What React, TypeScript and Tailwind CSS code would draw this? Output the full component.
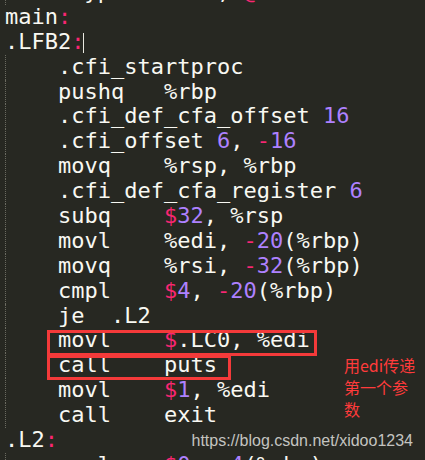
import React from 'react';

type Tok = [string, 'w' | 'p' | 'n'];

// indent = one level of indentation, drawn with the dotted guide
const lines: { indent: boolean; toks: Tok[]; cursor?: boolean }[] = [
  { indent: true, toks: [['.type   main, ', 'w'], ['@', 'p'], ['function', 'w']] },
  { indent: false, toks: [['main', 'w'], [':', 'p']] },
  { indent: false, toks: [['.LFB2', 'w'], [':', 'p']], cursor: true },
  { indent: true, toks: [['.cfi_startproc', 'w']] },
  { indent: true, toks: [['pushq   %rbp', 'w']] },
  { indent: true, toks: [['.cfi_def_cfa_offset ', 'w'], ['16', 'n']] },
  { indent: true, toks: [['.cfi_offset ', 'w'], ['6', 'n'], [', ', 'w'], ['-', 'p'], ['16', 'n']] },
  { indent: true, toks: [['movq    %rsp, %rbp', 'w']] },
  { indent: true, toks: [['.cfi_def_cfa_register ', 'w'], ['6', 'n']] },
  { indent: true, toks: [['subq    ', 'w'], ['$', 'p'], ['32', 'n'], [', %rsp', 'w']] },
  { indent: true, toks: [['movl    %edi, ', 'w'], ['-', 'p'], ['20', 'n'], ['(%rbp)', 'w']] },
  { indent: true, toks: [['movq    %rsi, ', 'w'], ['-', 'p'], ['32', 'n'], ['(%rbp)', 'w']] },
  { indent: true, toks: [['cmpl    ', 'w'], ['$', 'p'], ['4', 'n'], [', ', 'w'], ['-', 'p'], ['20', 'n'], ['(%rbp)', 'w']] },
  { indent: true, toks: [['je  .L2', 'w']] },
  { indent: true, toks: [['movl    ', 'w'], ['$', 'p'], ['.LC0, %edi', 'w']] },
  { indent: true, toks: [['call    puts', 'w']] },
  { indent: true, toks: [['movl    ', 'w'], ['$', 'p'], ['1', 'n'], [', %edi', 'w']] },
  { indent: true, toks: [['call    exit', 'w']] },
  { indent: false, toks: [['.L2', 'w'], [':', 'p']] },
  { indent: true, toks: [['movl    ', 'w'], ['$', 'p'], ['0', 'n'], [', ', 'w'], ['-', 'p'], ['4', 'n'], ['(%rbp)', 'w']] },
];

const color = { w: 'text-[#f8f8f2]', p: 'text-[#f92672]', n: 'text-[#ae81ff]' };

export default function App() {
  return (
    <div className="relative w-[425px] h-[460px] overflow-hidden bg-[#272822]">
      <div className="mt-[-20px] pl-[5px] font-['DejaVu_Sans_Mono',monospace] text-[22px] leading-[24.9px] whitespace-pre">
        {lines.map((l, i) => (
          <div key={i} className="flex h-[24.9px]">
            {l.indent && <span className="w-[53px] shrink-0 border-l border-dotted border-[#6a6a60]" />}
            {l.toks.map(([t, c], j) => (
              <span key={j} className={color[c]}>{t}</span>
            ))}
            {l.cursor && <span className="ml-[-1px] mt-[3px] h-[20px] border-l border-[#e8e8e0]" />}
          </div>
        ))}
      </div>

      {/* red annotation boxes drawn over the code */}
      <div className="absolute left-[47px] top-[330px] w-[270px] h-[26px] border-[3px] border-[#f43a3a]" />
      <div className="absolute left-[47px] top-[355px] w-[184px] h-[25px] border-[3px] border-[#f43a3a]" />

      <div className="absolute left-[344px] top-[354px] w-[78px] font-['Noto_Sans_CJK_SC',sans-serif] text-[16px] leading-[22px] text-[#ff3b3b]">
        用edi传递第一个参数
      </div>

      <div className="absolute right-[12px] top-[431px] font-['Liberation_Sans',Arial,sans-serif] text-[16px] leading-[20px] text-[#c4c4c0]">
        https://blog.csdn.net/xidoo1234
      </div>
    </div>
  );
}
